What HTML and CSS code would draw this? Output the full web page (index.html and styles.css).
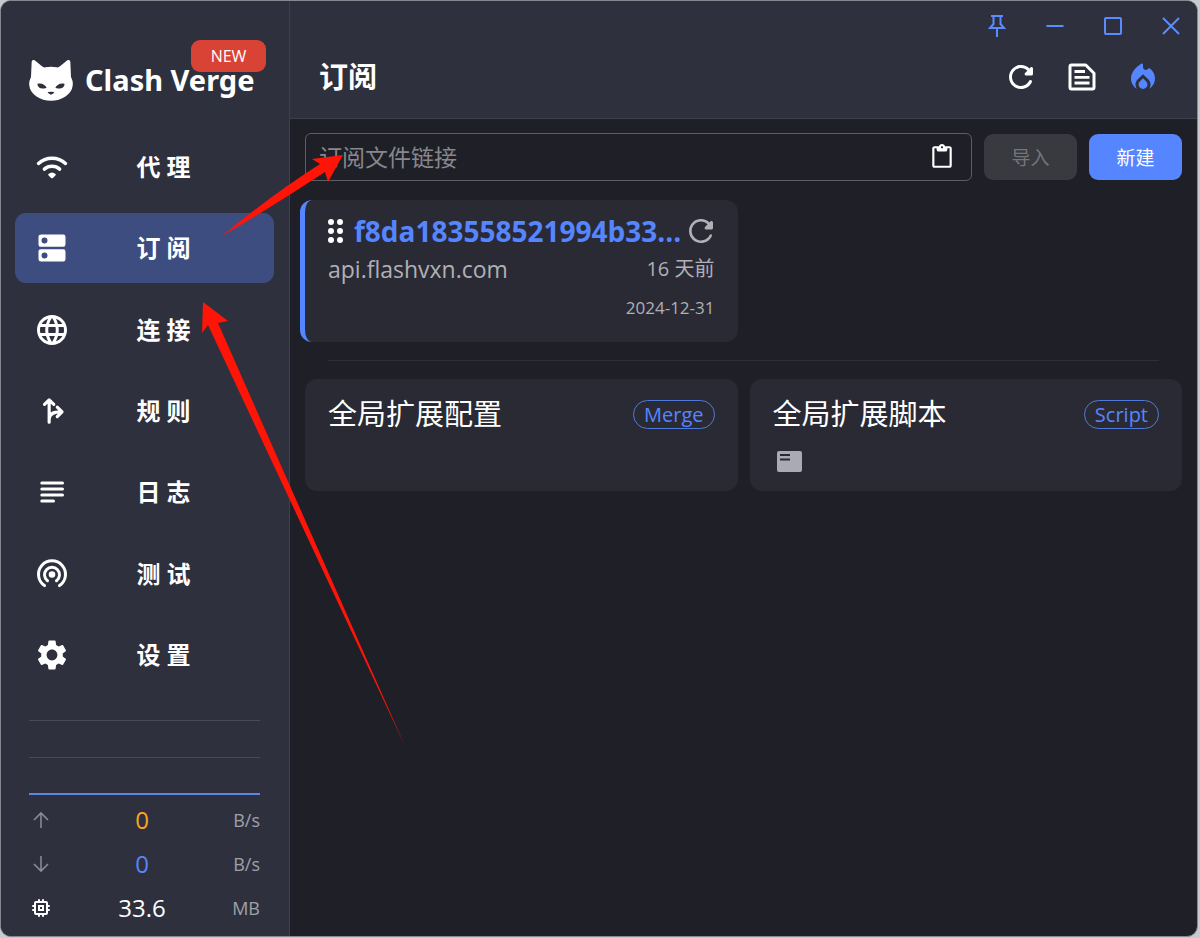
FILE: index.html
```html
<!DOCTYPE html>
<html lang="zh-CN">
<head>
    <meta charset="UTF-8">
    <title>Clash Verge</title>
    <link rel="stylesheet" href="styles.css">
</head>
<body>
<div class="window">
    <aside class="sidebar">
        <div class="logo">
            <svg class="logo_cat" viewBox="0 0 132 126">
                <path fill="#fff" fill-rule="evenodd" d="M8 8Q9 0 17 4L39 22Q43 26 49 25Q66 22 83 25Q89 26 93 22L115 4Q123 0 124 8L126 54Q133 68 131 80C128 106 98 125 66 125S4 106 1 80Q-1 68 6 54ZM25 75C27 88 38 92 53 86C48 77 37 71 25 75ZM107 75C95 71 84 77 79 86C94 92 105 88 107 75ZM56 99Q57 104 66 107Q75 104 76 99Q66 97 56 99Z"/>
            </svg>
            <span class="logo_text">Clash Verge</span>
            <span class="badge">NEW</span>
        </div>
        <nav class="menu">
            <a class="menu_item" href="#">
                <svg class="icon" viewBox="0 0 24 24"><g fill="none" stroke="#fff" stroke-width="2.3" stroke-linecap="round"><path d="M3 9.6C8 5 16 5 21 9.600"/><path d="M6.900 13.400C9.800 10.900 14.200 10.900 17.100 13.400"/></g><path fill="#fff" d="M9.600 16.700Q12 14.600 14.400 16.700Q14.700 17.200 14.300 17.600L12.600 19.300Q12 19.700 11.400 19.300L9.700 17.600Q9.300 17.200 9.600 16.700Z"/></svg>
                <span class="menu_text">代 理</span>
            </a>
            <a class="menu_item on" href="#">
                <svg class="icon" viewBox="0 0 24 24"><path fill="#fff" fill-rule="evenodd" d="M5 3H19.500Q21 3 21 4.500V9.500Q21 11.200 19.500 11.200H4.700Q3 11.200 3 9.500V4.500Q3 3 5 3ZM7 5A2 2 0 1 0 7 9A2 2 0 1 0 7 5ZM4.700 12.900H19.500Q21 12.900 21 14.500V19.500Q21 21 19.500 21H4.700Q3 21 3 19.500V14.500Q3 12.900 4.700 12.900ZM7 15A2 2 0 1 0 7 19A2 2 0 1 0 7 15Z"/></svg>
                <span class="menu_text">订 阅</span>
            </a>
            <a class="menu_item" href="#">
                <svg class="icon" viewBox="0 0 24 24"><path fill="#fff" d="M11.990 2C6.470 2 2 6.480 2 12s4.470 10 9.990 10C17.520 22 22 17.520 22 12S17.520 2 11.990 2zm6.930 6h-2.950c-.32-1.250-.78-2.450-1.380-3.560 1.840.63 3.370 1.910 4.330 3.560zM12 4.040c.83 1.200 1.480 2.530 1.910 3.960h-3.820c.43-1.430 1.080-2.760 1.910-3.960zM4.260 14C4.100 13.360 4 12.690 4 12s.1-1.360.26-2h3.380c-.08.66-.14 1.320-.14 2s.06 1.340.14 2H4.260zm.82 2h2.950c.32 1.250.78 2.450 1.380 3.560-1.840-.63-3.370-1.900-4.330-3.560zm2.950-8H5.080c.96-1.660 2.490-2.930 4.330-3.560C8.810 5.550 8.350 6.750 8.030 8zM12 19.960c-.83-1.200-1.480-2.530-1.910-3.960h3.820c-.43 1.430-1.080 2.760-1.910 3.960zM14.340 14H9.660c-.09-.66-.16-1.320-.16-2s.07-1.350.16-2h4.680c.09.65.16 1.320.16 2s-.07 1.340-.16 2zm.25 5.560c.6-1.110 1.060-2.310 1.380-3.560h2.950c-.96 1.650-2.490 2.930-4.330 3.560zM16.360 14c.08-.66.14-1.320.14-2s-.06-1.340-.14-2h3.380c.16.64.26 1.310.26 2s-.1 1.360-.26 2h-3.380z"/></svg>
                <span class="menu_text">连 接</span>
            </a>
            <a class="menu_item" href="#">
                <svg class="icon" viewBox="0 0 24 24"><g fill="none" stroke="#fff" stroke-width="2.100" stroke-linecap="round" stroke-linejoin="round"><path d="M10.100 19.500V5M7 7.600L10.100 4.600L13.200 7.600M10.100 17.500C10.100 14 12.500 12.600 18 12.600M15.500 9.400L18.700 12.600L15.500 15.800"/></g></svg>
                <span class="menu_text">规 则</span>
            </a>
            <a class="menu_item" href="#">
                <svg class="icon" viewBox="0 0 24 24"><path fill="none" stroke="#fff" stroke-width="2" stroke-linecap="round" d="M5.200 6H19M5.200 10H19M5.200 14H19M5.200 18H13"/></svg>
                <span class="menu_text">日 志</span>
            </a>
            <a class="menu_item" href="#">
                <svg class="icon" viewBox="0 0 24 24"><g fill="none" stroke="#fff" stroke-width="2" stroke-linecap="round"><path d="M7 19.700A9 9 0 1 1 17 19.700"/><path d="M9 16.500A5 5 0 1 1 15 16.500"/></g><circle cx="12" cy="12.300" r="2.200" fill="#fff"/></svg>
                <span class="menu_text">测 试</span>
            </a>
            <a class="menu_item" href="#">
                <svg class="icon" viewBox="0 0 24 24"><path fill="#fff" d="M19.140 12.940c.04-.3.06-.61.06-.94 0-.32-.02-.64-.07-.94l2.030-1.580c.18-.14.23-.41.12-.61l-1.920-3.320c-.12-.22-.37-.29-.59-.22l-2.390.96c-.5-.38-1.030-.7-1.620-.94l-.36-2.540c-.04-.24-.24-.41-.48-.41h-3.840c-.24 0-.43.17-.47.41l-.36 2.540c-.59.24-1.130.57-1.620.94l-2.390-.96c-.22-.08-.47 0-.59.22L2.740 8.870c-.12.21-.08.47.12.61l2.030 1.580c-.05.3-.09.63-.09.94s.02.64.07.94l-2.030 1.580c-.18.14-.23.41-.12.61l1.920 3.320c.12.22.37.29.59.22l2.390-.96c.5.38 1.030.7 1.620.94l.36 2.540c.05.24.24.41.48.41h3.840c.24 0 .44-.17.47-.41l.36-2.540c.59-.24 1.130-.56 1.620-.94l2.390.96c.22.08.47 0 .59-.22l1.920-3.320c.12-.22.07-.47-.12-.61l-2.010-1.580zM12 15.600c-1.980 0-3.600-1.620-3.600-3.600s1.620-3.600 3.600-3.600 3.600 1.620 3.600 3.600-1.620 3.600-3.600 3.600z"/></svg>
                <span class="menu_text">设 置</span>
            </a>
        </nav>
        <div class="traffic">
            <div class="graph">
                <div class="graph_line"></div>
                <div class="graph_line"></div>
            </div>
            <div class="traffic_row">
                <svg viewBox="0 0 24 24"><path fill="none" stroke="#898a93" stroke-width="1.600" d="M12 20V5M5 12L12 5L19 12"/></svg>
                <span class="traffic_num up">0</span>
                <span class="traffic_unit">B/s</span>
            </div>
            <div class="traffic_row">
                <svg viewBox="0 0 24 24"><path fill="none" stroke="#898a93" stroke-width="1.600" d="M12 4V19M5 12L12 19L19 12"/></svg>
                <span class="traffic_num down">0</span>
                <span class="traffic_unit">B/s</span>
            </div>
            <div class="traffic_row">
                <svg viewBox="0 0 24 24"><g fill="none" stroke="#fff" stroke-width="2"><rect x="6" y="6" width="12" height="12" rx="1"/><rect x="10" y="10" width="4" height="4"/><path stroke-linecap="round" d="M10 6V4M14 6V4M10 20V18M14 20V18M4 10H6M4 14H6M18 10H20M18 14H20"/></g></svg>
                <span class="traffic_num">33.6</span>
                <span class="traffic_unit">MB</span>
            </div>
        </div>
    </aside>
    <main class="main">
        <header class="header">
            <div class="controls">
                <button class="control" type="button" aria-label="置顶"><svg viewBox="0 0 24 24"><path d="M6 2H18M8.500 2V10L5 14H19L15.500 10V2M12 14V23"/></svg></button>
                <button class="control" type="button" aria-label="最小化"><svg viewBox="0 0 24 24"><path d="M3.500 12H20.500"/></svg></button>
                <button class="control" type="button" aria-label="最大化"><svg viewBox="0 0 24 24"><rect x="4" y="4" width="16" height="16" rx="1"/></svg></button>
                <button class="control" type="button" aria-label="关闭"><svg viewBox="0 0 24 24"><path d="M4 4L20 20M20 4L4 20"/></svg></button>
            </div>
            <div class="header_row">
                <h1 class="title">订阅</h1>
                <div class="tools">
                    <button class="tool" type="button" aria-label="刷新"><svg class="icon" viewBox="0 0 24 24"><path fill="#fff" d="M17.650 6.350c-1.630-1.630-3.940-2.570-6.480-2.310-3.670.37-6.690 3.350-7.100 7.020C3.520 15.910 7.270 20 12 20c3.190 0 5.930-1.870 7.210-4.560.32-.67-.16-1.440-.9-1.440-.37 0-.72.2-.88.53-1.130 2.430-3.840 3.970-6.800 3.310-2.220-.49-4.010-2.300-4.480-4.520C5.310 9.440 8.260 6 12 6c1.660 0 3.140.69 4.220 1.780l-1.510 1.510c-.63.63-.19 1.710.7 1.710H19c.55 0 1-.45 1-1V6.410c0-.89-1.080-1.340-1.710-.71l-.64.65z"/></svg></button>
                    <button class="tool" type="button" aria-label="配置文件"><svg class="icon" viewBox="0 0 24 24"><path fill="none" stroke="#fff" stroke-width="2" stroke-linejoin="round" d="M5 4H14.500L20 9.500V19Q20 20 19 20H5Q4 20 4 19V5Q4 4 5 4Z"/><path stroke="#fff" stroke-width="1.900" d="M7 8.300H14M7 12.200H17M7 16H17"/></svg></button>
                    <button class="tool" type="button" aria-label="重新激活"><svg class="icon" viewBox="0 0 24 24"><path fill="#5586ff" d="M12 12.900l-2.130 2.090c-.56.56-.87 1.290-.87 2.070C9 18.680 10.350 20 12 20s3-1.320 3-2.940c0-.78-.31-1.520-.87-2.070L12 12.900zM16 6l-.44.55C14.380 8.020 12 7.190 12 5.300V3.900Q12 2.400 10.700 3.200C8 5 4 8.500 4 13c0 2.920 1.560 5.470 3.890 6.860-.56-.79-.89-1.760-.89-2.800 0-1.320.52-2.560 1.470-3.500L12 10.100l3.530 3.470c.95.93 1.470 2.170 1.470 3.500 0 1.020-.31 1.960-.85 2.750 1.890-1.150 3.290-3.060 3.710-5.300.66-3.550-1.070-6.900-3.860-8.520z"/></svg></button>
                </div>
            </div>
        </header>
        <div class="content">
            <form class="import">
                <div class="url_box">
                    <input class="url" type="text" placeholder="订阅文件链接" aria-label="订阅文件链接">
                    <button class="paste" type="button" aria-label="粘贴"><svg viewBox="0 0 24 24"><path fill="#fff" d="M19 2h-4.180C14.400.84 13.300 0 12 0S9.600.84 9.180 2H5c-1.100 0-2 .9-2 2v16c0 1.100.9 2 2 2h14c1.100 0 2-.9 2-2V4c0-1.100-.9-2-2-2zm-7 0c.55 0 1 .45 1 1s-.45 1-1 1-1-.45-1-1 .45-1 1-1zm7 18H5V4h2v1q0 2 2 2h6q2 0 2-2V4h2v16z"/></svg></button>
                </div>
                <button class="btn" type="button" disabled>导入</button>
                <button class="btn primary" type="button">新建</button>
            </form>
            <div class="cards">
                <section class="card profile">
                    <div class="card_row">
                        <svg class="drag" viewBox="7 4 10 16"><g fill="#fff"><circle cx="9" cy="6" r="2"/><circle cx="15" cy="6" r="2"/><circle cx="9" cy="12" r="2"/><circle cx="15" cy="12" r="2"/><circle cx="9" cy="18" r="2"/><circle cx="15" cy="18" r="2"/></g></svg>
                        <h2 class="profile_name">f8da183558521994b33...</h2>
                        <button class="update" type="button" aria-label="更新"><svg viewBox="4 4 16 16"><path fill="#b0b0b8" d="M17.650 6.350c-1.630-1.630-3.940-2.570-6.480-2.310-3.670.37-6.690 3.350-7.100 7.020C3.520 15.910 7.270 20 12 20c3.190 0 5.930-1.870 7.210-4.560.32-.67-.1-1.200-.7-1.200-.37 0-.6.1-.75.4-1.130 2.430-4.170 4.130-7.130 3.470-2.220-.49-4.210-2.500-4.680-4.720C5 9.100 8.260 5.600 12 5.600c1.660 0 3.340.79 4.420 1.880l-1.710 1.810c-.63.63-.19 1.710.7 1.710H19c.55 0 1-.45 1-1V6.410c0-.89-1.080-1.340-1.710-.71l-.64.65z"/></svg></button>
                    </div>
                    <div class="card_row from">
                        <span class="host">api.flashvxn.com</span>
                        <span class="ago">16 天前</span>
                    </div>
                    <div class="card_row expire">2024-12-31</div>
                </section>
            </div>
            <hr class="divider">
            <div class="cards">
                <section class="card">
                    <div class="card_row">
                        <h2 class="card_title">全局扩展配置</h2>
                        <span class="chip">Merge</span>
                    </div>
                </section>
                <section class="card">
                    <div class="card_row">
                        <h2 class="card_title">全局扩展脚本</h2>
                        <span class="chip">Script</span>
                    </div>
                    <button class="log" type="button" aria-label="脚本日志"><svg viewBox="0 0 25 21"><rect width="25" height="21" rx="2" fill="#aaaab4"/><path stroke="#2a2a35" stroke-width="2" d="M3 4H13M3 8.500H13"/></svg></button>
                </section>
            </div>
        </div>
    </main>
</div>
<!-- 操作指引箭头 -->
<svg class="guide" width="420" height="750" viewBox="0 0 420 750">
    <path fill="#ff1408" d="M343 155L312 159L320 164Q270 196 222 236Q275 205 325 172L328 182Z"/>
    <path fill="#ff1408" d="M203 302L228 321L218 323L405 746L208 325L202 333Z"/>
</svg>
</body>
</html>
```
FILE: styles.css
```css
* {
    box-sizing: border-box;
}

body, h1, h2, hr {
    margin: 0;
    padding: 0;
}

body {
    padding-right: 2px;
    background-color: #c9cacd;
    color: #fff;
    font-family: "Open Sans", "Noto Sans CJK SC", sans-serif;
}

button, input {
    padding: 0;
    border: 0;
    background: none;
    color: inherit;
    font-family: inherit;
}

svg {
    display: block;
}

a {
    color: inherit;
    text-decoration: none;
}

.icon {
    width: 36px;
    height: 36px;
}

.window {
    display: flex;
    overflow: hidden;
    min-height: calc(100vh - 1px);
    border: 1px solid #85888e;
    border-radius: 11px;
    background-color: #1e1f27;
}

/* 侧边栏 */
.sidebar {
    display: flex;
    flex-direction: column;
    flex: none;
    width: 289px;
    border-right: 1px solid #3e404c;
    background-color: #2e303d;
}

.logo {
    position: relative;
    display: flex;
    align-items: center;
    gap: 12px;
    height: 131px;
    padding: 26px 24px 0 28px;
}

.logo_cat {
    width: 44px;
    height: 42px;
}

.logo_text {
    font-family: "Noto Sans", sans-serif;
    font-size: 29px;
    font-weight: 700;
    white-space: nowrap;
}

.badge {
    position: absolute;
    top: 39px;
    right: 23px;
    width: 75px;
    border-radius: 9px;
    background-color: #d94336;
    font-size: 16px;
    line-height: 32px;
    text-align: center;
}

.menu {
    display: flex;
    flex: 1;
    flex-direction: column;
    justify-content: space-between;
    padding: 0 15px 0 14px;
}

.menu_item {
    display: flex;
    align-items: center;
    height: 70px;
    padding: 0 17px 0 19px;
    border-radius: 11px;
}

.menu_item.on {
    background-color: #3e4d80;
}

.menu_text {
    flex: 1;
    font-size: 24px;
    font-weight: 700;
    line-height: 32px;
    text-align: center;
}

.traffic {
    padding: 30px 29px 6px 28px;
}

.graph {
    height: 75px;
    margin-bottom: 3px;
    border-bottom: 2px solid #5b85e6;
}

.graph_line {
    height: 37px;
    border-top: 1px solid #484a56;
}

.traffic_row {
    display: grid;
    grid-template-columns: 24px 1fr 29px;
    align-items: center;
    height: 44px;
}

.traffic_row svg {
    width: 24px;
    height: 24px;
}

.traffic_num {
    font-size: 24px;
    line-height: 32px;
    text-align: center;
}

.up {
    color: #f5a623;
}

.down {
    color: #5586ff;
}

.traffic_unit {
    justify-self: end;
    color: #a0a1a8;
    font-size: 18px;
}

/* 右侧 */
.main {
    flex: 1;
    min-width: 0;
}

.header {
    height: 118px;
    border-bottom: 1px solid #3e404c;
    background-color: #2e303d;
}

.controls {
    display: flex;
    justify-content: flex-end;
    gap: 6px;
}

.control {
    display: flex;
    align-items: center;
    justify-content: center;
    width: 52px;
    height: 50px;
}

.control svg {
    width: 24px;
    height: 24px;
    fill: none;
    stroke: #5b8cff;
    stroke-width: 2;
}

.header_row {
    display: flex;
    align-items: center;
    justify-content: space-between;
    height: 51px;
    padding: 0 36px 0 29px;
}

.title {
    font-size: 29px;
    line-height: 40px;
}

.tools {
    display: flex;
    gap: 25px;
}

.content {
    padding: 14px 15px;
}

.import {
    display: flex;
    align-items: center;
    gap: 12px;
}

.url_box {
    display: flex;
    align-items: center;
    flex: 1;
    height: 48px;
    padding: 0 16px 0 13px;
    border: 1px solid #5d5d64;
    border-radius: 6px;
}

.url {
    flex: 1;
    min-width: 0;
    font-size: 23px;
    outline: none;
}

.url::placeholder {
    color: #87878c;
    opacity: 1;
}

.paste svg {
    width: 26px;
    height: 26px;
}

.btn {
    width: 93px;
    height: 46px;
    border-radius: 9px;
    background-color: #393940;
    color: #75757a;
    font-size: 19px;
}

.btn.primary {
    background-color: #5586ff;
    color: #fff;
}

.cards {
    display: grid;
    grid-template-columns: 1fr 1fr;
    gap: 12px;
}

.import + .cards {
    margin-top: 19px;
}

.card {
    min-width: 0;
    min-height: 112px;
    padding: 17px 23px 19px;
    border-radius: 12px;
    background-color: #2a2a35;
}

.profile {
    margin-left: -5px;
    padding: 13px 23px 17px;
    border-left: 5px solid #5586ff;
}

.card_row {
    display: flex;
    align-items: center;
    justify-content: space-between;
    height: 36px;
}

.card_row.from {
    height: 40px;
    color: #b0b0b6;
}

.card_row.expire {
    justify-content: flex-end;
    color: #b0b0b6;
    font-size: 17px;
}

.drag {
    flex: none;
    width: 15px;
    height: 24px;
}

.profile_name {
    overflow: hidden;
    flex: 1;
    min-width: 0;
    margin-left: 11px;
    color: #5586ff;
    font-size: 28px;
    line-height: 36px;
    white-space: nowrap;
}

.update {
    padding: 0 2px 0 4px;
}

.update svg {
    width: 24px;
    height: 24px;
}

.host {
    font-size: 23px;
    line-height: 32px;
}

.ago {
    font-size: 20px;
    line-height: 28px;
}

.divider {
    height: 1px;
    margin: 18px 23px;
    border: 0;
    background-color: #2e2f37;
}

.card_title {
    font-size: 29px;
    font-weight: 400;
    line-height: 36px;
}

.chip {
    padding: 0 10px;
    border: 1px solid #5079dc;
    border-radius: 15px;
    color: #5586ff;
    font-size: 20px;
    line-height: 27px;
}

.log {
    display: block;
    margin: 19px 0 0 4px;
}

.log svg {
    width: 25px;
    height: 21px;
}

/* 箭头盖在界面上面 */
.guide {
    position: absolute;
    top: 0;
    left: 0;
    pointer-events: none;
}
```
